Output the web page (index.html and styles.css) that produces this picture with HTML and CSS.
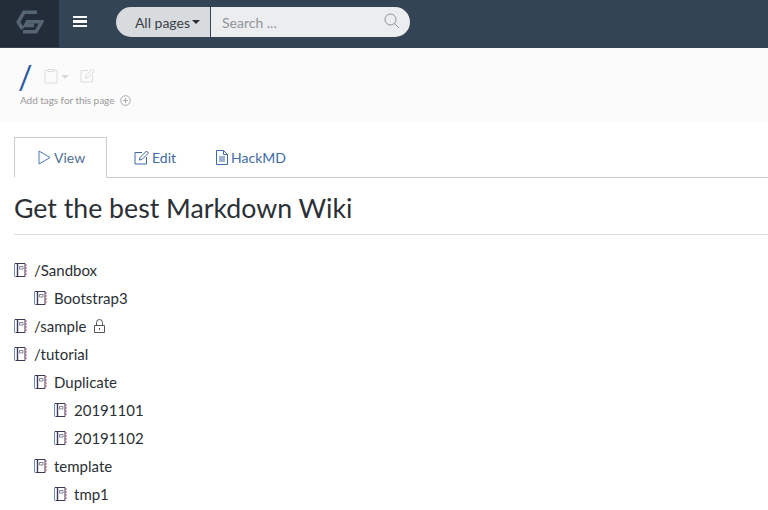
FILE: index.html
```html
<!doctype html>
<html>
<head>
  <meta charset="utf-8">
  <title>Get the best Markdown Wiki</title>
  <link rel="stylesheet" href="styles.css">
</head>
<body>

  <nav class="navbar">
    <a class="logo">
      <svg width="28" height="24" viewBox="0 0 28 24" fill="none" stroke="#566574" stroke-width="3.6">
        <path d="M21 2.2H8L2.2 12L6.5 19"/>
        <path d="M7 21.8H20L25.8 11.8H11.5L9.5 15.5H18"/>
      </svg>
    </a>
    <a class="burger"><span></span><span></span><span></span></a>
    <div class="search">
      <div class="scope">All pages<i class="caret"></i></div>
      <div class="search-box">
        <span>Search ...</span>
        <svg width="16" height="16" viewBox="0 0 16 16" fill="none" stroke="#8a9096" stroke-width="1">
          <circle cx="6.5" cy="6.5" r="5.5"/>
          <path d="M10.5 10.5L15 15"/>
        </svg>
      </div>
    </div>
  </nav>

  <header class="page-head">
    <div class="title-row">
      <span class="slash">/</span>
      <svg class="clip" width="14" height="16" viewBox="0 0 14 16" fill="none" stroke="#dcdcdc">
        <path d="M4 2.5H1V15H13V2.5H10"/>
        <path d="M4 3.5V1.5H10V3.5Z"/>
      </svg>
      <i class="caret caret-light"></i>
      <svg class="pencil" width="15" height="15" viewBox="0 0 15 15" fill="none" stroke="#dcdcdc">
        <path d="M8 2.5H1V14H12.5V7"/>
        <path d="M5.5 10L6 7.5L12.5 1L14.5 3L8 9.5Z"/>
      </svg>
    </div>
    <div class="tags">
      Add tags for this page
      <svg width="11" height="11" viewBox="0 0 11 11" fill="none" stroke="#aaa">
        <circle cx="5.5" cy="5.5" r="4.8"/>
        <path d="M5.5 3V8M3 5.5H8"/>
      </svg>
    </div>
  </header>

  <main class="content">
    <ul class="tabs">
      <li class="tab active">
        <svg width="13" height="15" viewBox="0 0 13 15" fill="none" stroke="#4a78b5">
          <path d="M1 1L12 7.5L1 14Z"/>
        </svg>
        View
      </li>
      <li class="tab">
        <svg width="15" height="15" viewBox="0 0 15 15" fill="none" stroke="#3e6aa5">
          <path d="M8 2.5H1V14H12.5V7"/>
          <path d="M5.5 10L6 7.5L12.5 1L14.5 3L8 9.5Z"/>
        </svg>
        Edit
      </li>
      <li class="tab">
        <svg width="12" height="15" viewBox="0 0 12 15" fill="none" stroke="#3e6aa5">
          <path d="M.5 .5H7.5L11.5 4.5V14.5H.5Z"/>
          <path d="M7.5 .5V4.5H11.5M3 7H9M3 9H9M3 11H9"/>
        </svg>
        HackMD
      </li>
    </ul>

    <h1 class="title">Get the best Markdown Wiki</h1>

    <ul class="tree">
      <li>
        <a class="page"><svg class="nb"><use href="#notebook"/></svg>/Sandbox</a>
        <ul>
          <li><a class="page"><svg class="nb"><use href="#notebook"/></svg>Bootstrap3</a></li>
        </ul>
      </li>
      <li>
        <a class="page"><svg class="nb"><use href="#notebook"/></svg>/sample
          <svg class="lock" width="13" height="14" viewBox="0 0 13 14" fill="none" stroke="#555">
            <path d="M3.5 6.5V3.5A3 3 0 0 1 9.5 3.5V6.5"/>
            <path d="M1.5 6.5H11.5V13.5H1.5Z"/>
            <path d="M6.5 9V11" stroke="#8a3a4a"/>
          </svg>
        </a>
      </li>
      <li>
        <a class="page"><svg class="nb"><use href="#notebook"/></svg>/tutorial</a>
        <ul>
          <li>
            <a class="page"><svg class="nb"><use href="#notebook"/></svg>Duplicate</a>
            <ul>
              <li><a class="page"><svg class="nb"><use href="#notebook"/></svg>20191101</a></li>
              <li><a class="page"><svg class="nb"><use href="#notebook"/></svg>20191102</a></li>
            </ul>
          </li>
          <li>
            <a class="page"><svg class="nb"><use href="#notebook"/></svg>template</a>
            <ul>
              <li><a class="page"><svg class="nb"><use href="#notebook"/></svg>tmp1</a></li>
            </ul>
          </li>
        </ul>
      </li>
    </ul>
  </main>

  <svg class="defs" width="0" height="0">
    <symbol id="notebook" viewBox="0 0 13 14">
      <path d="M1 .5H11V13.5H1.5" fill="none" stroke="#3a3a58"/>
      <path d="M.5 .5V13.5" fill="none" stroke="#6d8fc0"/>
      <path d="M3.5 1V13" fill="none" stroke="#3a3a58" stroke-width="1.4"/>
      <path d="M5.5 3.5H9V6H5.5Z" fill="none" stroke="#7f8598"/>
      <path d="M12 1V13" fill="none" stroke="#b0607a" stroke-dasharray="2 1"/>
    </symbol>
  </svg>

</body>
</html>
```

FILE: styles.css
```css
* {
  box-sizing: border-box;
}
html, body {
  height: 510px;
  overflow: hidden;
}
body {
  margin: 0;
  font-family: Lato, "Open Sans", sans-serif;
  font-size: 14px;
  color: #2b3036;
  background: #fff;
}
ul {
  list-style: none;
  margin: 0;
  padding: 0;
}
.defs {
  display: block;
}

/* navbar */
.navbar {
  display: flex;
  align-items: flex-start;
  height: 48px;
  background: #334455;
}
.logo {
  display: flex;
  align-items: center;
  justify-content: center;
  width: 59px;
  height: 47px;
  padding-bottom: 3px;
  background: #222d39;
}
.burger {
  display: flex;
  flex-direction: column;
  gap: 2px;
  width: 14px;
  margin: 16px 0 0 14px;
}
.burger span {
  height: 2.4px;
  background: #fff;
}
.search {
  display: flex;
  width: 294px;
  height: 30px;
  margin: 7px 0 0 29px;
  border-radius: 15px;
  overflow: hidden;
}
.scope {
  display: flex;
  align-items: center;
  justify-content: flex-end;
  width: 94px;
  padding-right: 10px;
  background: #d8dbde;
  color: #3a4046;
}
.scope .caret {
  margin-left: 2px;
}
.caret {
  display: inline-block;
  margin-left: 3px;
  border-top: 4px solid #2b3036;
  border-left: 4px solid transparent;
  border-right: 4px solid transparent;
}
.search-box {
  display: flex;
  flex: 1;
  align-items: center;
  justify-content: space-between;
  margin-left: 1px;
  padding: 0 10px 0 11px;
  background: #ecedef;
  color: #8f959b;
}
.search-box svg {
  margin-top: -3px;
}

/* page header */
.page-head {
  height: 73px;
  padding: 15px 20px 0;
  background: #fbfbfb;
}
.title-row {
  display: flex;
  align-items: center;
  height: 28px;
}
.slash {
  width: 26px;
  margin-left: -2px;
  font-size: 32px;
  font-weight: 400;
  line-height: 28px;
  color: #2a5a9e;
}
.clip {
  margin-top: -3px;
}
.caret-light {
  margin: 0 0 0 3px;
  border-top-color: #d8d8d8;
}
.pencil {
  margin: -3px 0 0 11px;
}
.tags {
  display: flex;
  align-items: center;
  gap: 6px;
  margin-top: 3px;
  font-size: 10px;
  letter-spacing: -.05px;
  color: #999;
}

/* tabs */
.content {
  padding: 16px 0 0 14px;
}
.tabs {
  display: flex;
  height: 41px;
  border-bottom: 1px solid #ccc;
}
.tab {
  display: flex;
  align-items: center;
  gap: 3px;
  height: 41px;
  padding: 0 20px 0 27px;
  color: #3e6aa5;
}
.tab:last-child {
  padding-left: 20px;
}
.tab.active {
  width: 93px;
  padding-left: 23px;
  background: #fff;
  border: 1px solid #ccc;
  border-bottom: 1px solid #fff;
  color: #4f6f95;
}
.title {
  margin: 0;
  height: 57px;
  padding-top: 13px;
  font-size: 26.7px;
  font-weight: 400;
  line-height: 34px;
  border-bottom: 1px solid #ddd;
}

/* page tree */
.tree {
  margin-top: 21px;
  font-size: 15px;
}
.tree ul {
  padding-left: 20px;
}
.page {
  display: flex;
  align-items: center;
  height: 28px;
}
.nb {
  width: 13px;
  height: 14px;
  margin-right: 7px;
}
.lock {
  margin-left: 7px;
}
```
